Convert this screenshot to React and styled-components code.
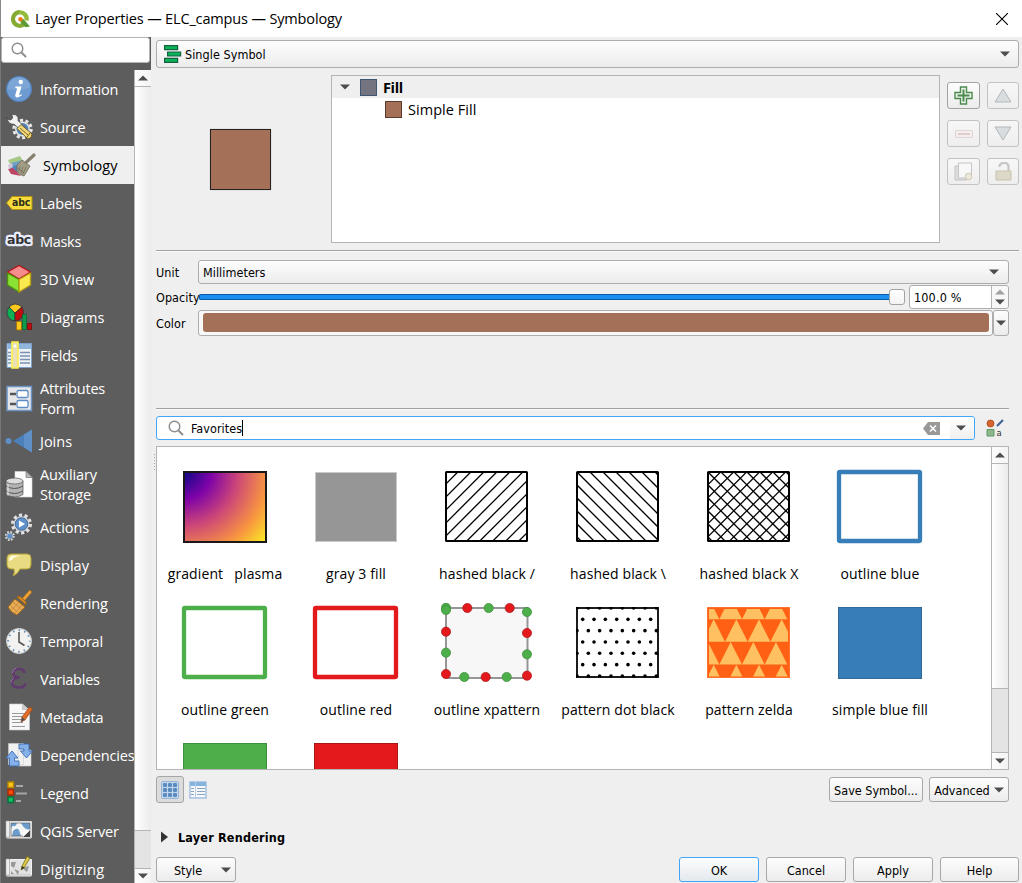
import React from 'react';
import styled, { createGlobalStyle, css } from 'styled-components';

const GlobalStyle = createGlobalStyle`
  * { box-sizing: border-box; }
  html, body { margin: 0; padding: 0; overflow: hidden; }
  svg { display: block; flex: none; }
  button { font: inherit; color: inherit; padding: 0; margin: 0; }
`;

const segoe = css`font-family: "Open Sans", "Noto Sans", sans-serif; font-stretch: normal;`;
const BROWN = '#a57058';

/* ---------- window ---------- */
const Window = styled.div`
  width: 1022px; height: 883px; overflow: hidden;
  display: flex; flex-direction: column;
  background: #efefef; color: #000;
  font-family: "DejaVu Sans Condensed", "DejaVu Sans", sans-serif;
  font-stretch: condensed; font-size: 12.5px; letter-spacing: 0.05px;
`;
const TitleBar = styled.header`
  flex: none; height: 37px; background: #fff; padding: 0 14px 0 9px;
  display: flex; align-items: center; border-left: 1px solid #8a8a8a;
`;
const Title = styled.h1`
  ${segoe}
  margin: 0 0 0 4px; font-size: 14.5px; font-weight: 400; letter-spacing: -0.15px; flex: 1; white-space: nowrap;
`;
const Body = styled.div`flex: 1; min-height: 0; display: flex;`;

/* ---------- sidebar ---------- */
const Sidebar = styled.aside`
  width: 151px; flex: none; background: #5d5d5d; border-left: 1px solid #777;
  display: flex; flex-direction: column;
`;
const SideSearch = styled.div`
  height: 26px; margin: 0 1px 7px 0; background: #fff; border: 1px solid #b4b4b4; border-radius: 3px;
  display: flex; align-items: center; padding-left: 9px; flex: none;
`;
const SideBody = styled.div`display: flex; flex: 1; min-height: 0;`;
const NavList = styled.nav`width: 133px; overflow: hidden;`;
const NavItem = styled.div`
  ${segoe}
  height: ${p => (p.$tall ? 48 : 38)}px; display: flex; align-items: center;
  padding-left: 3px; font-size: 14.5px; line-height: 20px; white-space: pre;
  letter-spacing: ${p => p.$ls ?? -0.13}px;
  color: ${p => (p.$active ? '#000' : '#fff')};
  background: ${p => (p.$active ? '#efefef' : 'transparent')};
  & > span { margin-left: ${p => (p.$active ? 9 : 6)}px; margin-top: 2px; }
`;
const ScrollBar = styled.div`
  width: 17px; flex: none; display: flex; flex-direction: column; border-left: 1px solid #b4b4b4;
  background: linear-gradient(90deg, #fff, #ebebeb);
`;
const ScrollArrow = styled.div`
  height: ${p => p.$h ?? 17}px; flex: none; display: flex; align-items: center; justify-content: center;
  background: linear-gradient(90deg, #fefefe, #f3f3f3);
  ${p => (p.$down ? 'border-top' : 'border-bottom')}: 1px solid #b4b4b4;
`;
const ScrollRest = styled.div`
  margin-top: auto; height: ${p => p.$h}px; background: #e4e4e4; border-top: 1px solid #b4b4b4;
`;
const Splitter = styled.div`
  width: 5px; flex: none; padding: 417px 0 0 3px; display: flex; flex-direction: column; gap: 2px;
  & > i { width: 1px; height: 1px; background: #a5a5a5; }
`;

/* ---------- main ---------- */
const Main = styled.main`flex: 1; padding: 3px 3px 0 0; display: flex; flex-direction: column;`;
const Combo = styled.div`
  height: ${p => p.$h}px; flex: ${p => (p.$grow ? 1 : 'none')};
  border: 1px solid #adadad; border-radius: 3px; background: linear-gradient(#fdfdfd, #ececec);
  display: flex; align-items: center; padding: 0 ${p => p.$pr}px 0 ${p => p.$pl}px;
  & > span { flex: 1; }
  & > svg + span { margin-left: 3px; }
`;
const SymbolRow = styled.section`display: flex; margin-top: 7px; height: 168px; flex: none;`;
const PreviewPane = styled.div`width: 175px; display: flex; align-items: center; padding-left: 54px;`;
const Preview = styled.div`width: 61px; height: 61px; background: ${BROWN}; border: 1px solid #222; box-shadow: 0 0 1px #aaa;`;
const Tree = styled.div`${segoe} width: 609px; background: #fff; border: 1px solid #b4b4b4; font-size: 14.5px;`;
const TreeRow = styled.div`
  height: 22px; line-height: 22px; display: flex; align-items: center; padding-left: ${p => p.$indent}px;
  background: ${p => (p.$head ? '#efefef' : 'transparent')}; font-weight: ${p => (p.$head ? 700 : 400)};
  letter-spacing: ${p => (p.$head ? -0.35 : 0.05)}px;
  & > svg { margin-right: 10px; }
  & > span { margin-top: 2px; }
`;
const Swatch = styled.i`
  width: 17px; height: 17px; margin-right: 6px; background: ${p => p.$bg}; border: 1px solid ${p => p.$line};
`;
const ToolGrid = styled.div`
  margin-left: 7px; padding-top: 7px; display: grid; grid-template-columns: 33px 32px; grid-auto-rows: 27px; gap: 11px 7px;
`;
const ToolButton = styled.button`
  border: 1px solid ${p => (p.$off ? '#c3c3c3' : '#a3a3a3')}; border-radius: 3px;
  background: linear-gradient(${p => (p.$off ? '#f7f7f7, #eee' : '#fdfdfd, #ececec')});
  display: flex; align-items: center; justify-content: center;
`;
const Separator = styled.div`
  flex: none; height: 2px; width: ${p => p.$w}px; margin-top: ${p => p.$mt}px; background: #fafafa; border-top: 1px solid #a0a0a0;
`;
const FormRow = styled.div`
  width: 853px; flex: none; height: ${p => p.$h}px; margin-top: ${p => p.$mt}px; display: flex; align-items: center;
`;
const FormLabel = styled.label`width: 42px; white-space: nowrap;`;
const Slider = styled.div`flex: 1; height: 16px; display: flex; align-items: center; margin: 0 4px 0 1px;`;
const Track = styled.div`
  flex: 1; height: 6px; border: 1px solid #0c5aa4; border-radius: 2px 0 0 2px; border-right: 0; background: #1a8ff0;
`;
const Handle = styled.div`
  width: 16px; height: 16px; border: 1px solid #a3a3a3; border-radius: 3px; background: linear-gradient(#fff, #f4f4f4);
`;
const SpinBox = styled.div`
  width: 100px; height: 24px; border: 1px solid #adadad; border-radius: 3px; background: #fff; display: flex; align-items: center;
  padding-left: 4px; letter-spacing: 0.15px;
  & > span { flex: 1; }
`;
const SpinArrows = styled.div`
  width: 17px; height: 22px; border-left: 1px solid #b4b4b4; background: #f8f8f8; border-radius: 0 3px 3px 0;
  display: flex; flex-direction: column; justify-content: center; gap: 4px; align-items: center; padding-bottom: 1px;
`;
const ColorButton = styled.button`
  flex: 1; height: 26px; border: 1px solid #adadad; border-radius: 3px; background: #f8f8f8; padding: 2px 3px 3px 4px; display: flex;
`;
const ColorFill = styled.span`flex: 1; border-radius: 3px; background: ${BROWN};`;
const ColorArrow = styled.button`
  width: 16px; height: 26px; border: 1px solid #adadad; border-radius: 3px; background: linear-gradient(#fdfdfd, #ececec);
  display: flex; align-items: center; justify-content: center;
`;
const FilterRow = styled.div`display: flex; flex: none; align-items: center; margin-top: 6px; height: 24px; gap: 11px;`;
const FilterBox = styled.div`
  width: 819px; height: 24px; border: 1px solid #43a5f5; border-radius: 3px; background: #fff;
  display: flex; align-items: center; padding-left: 11px;
`;
const FilterText = styled.div`flex: 1; display: flex; align-items: center; margin-left: 7px;`;
const Caret = styled.i`width: 1px; height: 16px; background: #000;`;
const FilterDrop = styled.div`
  width: 24px; height: 22px; margin-left: 10px; background: linear-gradient(#fff, #f0f0f0); border-radius: 0 3px 3px 0;
  display: flex; align-items: center; justify-content: center; padding-right: 3px;
`;
const SymbolPanel = styled.section`
  width: 853px; height: 324px; flex: none; margin-top: 6px; border: 1px solid #b4b4b4; background: #fff; display: flex; overflow: hidden;
`;
const SymbolGrid = styled.div`
  flex: 1; padding: 20px 0 0 2px; display: grid; grid-template-columns: repeat(6, 131px); grid-auto-rows: 136px;
`;
const SymbolCell = styled.figure`
  ${segoe}
  margin: 0; display: flex; flex-direction: column; align-items: center; font-size: 14px; white-space: pre;
  & > figcaption { margin: 17px 0 0 1px; line-height: 20px; letter-spacing: 0.1px; }
`;
const FooterTools = styled.div`
  width: 853px; height: 27px; flex: none; margin-top: 6px; display: flex; align-items: center;
`;
const ViewButton = styled.button`
  width: 28px; height: 27px; border-radius: 3px; display: flex; align-items: center; justify-content: center;
  border: 1px solid ${p => (p.$on ? '#a6a6a6' : 'transparent')}; background: ${p => (p.$on ? '#dcdcdc' : 'transparent')};
`;
const Spacer = styled.div`flex: 1;`;
const PushButton = styled.button`
  width: ${p => p.$w}px; height: 25px; margin-left: ${p => p.$ml ?? 0}px; border-radius: 3px;
  border: 1px solid ${p => (p.$primary ? '#43a5f5' : '#a8a8a8')};
  background: linear-gradient(${p => (p.$primary ? '#fdfdfd, #e3e9ee' : '#fdfdfd, #ececec')});
  display: flex; align-items: center; justify-content: center; gap: ${p => p.$gap ?? 4}px;
  padding: 1px 0 0 ${p => p.$pl ?? 0}px; white-space: nowrap;
`;
const GroupHeader = styled.div`
  height: 20px; flex: none; margin: 24px 0 0 4px; display: flex; align-items: center; gap: 9px; font-weight: 700; letter-spacing: 0.2px;
`;
const DialogButtons = styled.footer`height: 25px; flex: none; margin-top: 10px; display: flex;`;

/* ---------- small drawings ---------- */
const Down = ({ w = 10, c = '#4d4d4d' }) => (
  <svg width={w} height="6" viewBox="0 0 10 6"><path d="M0 .5h10L5 5.5z" fill={c} /></svg>
);
const Up = ({ w = 10, c = '#4d4d4d' }) => (
  <svg width={w} height="6" viewBox="0 0 10 6"><path d="M0 5.5h10L5 .5z" fill={c} /></svg>
);
const Magnifier = () => (
  <svg width="16" height="16" viewBox="0 0 16 16" fill="none" stroke="#8c8c8c">
    <circle cx="6.5" cy="6.5" r="5.3" strokeWidth="1.4" /><path d="M10.5 10.5 15 15" strokeWidth="2" />
  </svg>
);
const Gear = ({ cx, cy, r, fill = '#e8e8e8', n = 10, w = 3.4 }) => (
  <g>
    <circle cx={cx} cy={cy} r={r} fill="none" stroke={fill} strokeWidth={w}
      strokeDasharray={`${(Math.PI * 2 * r) / n / 1.8} ${(Math.PI * 2 * r) / n * (1 - 1 / 1.8)}`} />
    <circle cx={cx} cy={cy} r={r - 1} fill={fill} stroke="#aaa" strokeWidth=".3" />
  </g>
);

const icons = {
  info: <>
    <circle cx="15" cy="15" r="12.600" fill="#6d9bd1" stroke="#4d80bd" />
    <path d="M4 15a11 11 0 0 1 22-2q-7 5-22 2z" fill="#8db2de" opacity=".5" />
    <circle cx="16.8" cy="8" r="2.2" fill="#fff" />
    <path d="M11.5 12.5h6l-2.3 8q-.2 1.5 2.8-.5l-.4 1.6q-6.5 4-6.4-.4l1.8-6.3q.1-1-1.8-.8z" fill="#fff" />
  </>,
  source: <>
    <Gear cx={18.5} cy={17} r={8.500} />
    <circle cx="18.5" cy="17" r="6" fill="#5580b8" />
    <path d="M2.8 5.5q1 3 4 2.500l1.800-2q.4-2.600-1.800-3.500l4.700.2q3.500 2 2.600 6l6 6-3 3.500-7-6q-6 .5-7.300-6.700z" fill="#f2f2f2" stroke="#444" strokeWidth=".7" />
    <path d="m13 16.500 4-4 11 9.500-1 3.500-3 1.500z" fill="#f3d877" stroke="#6b5a20" strokeWidth=".9" />
    <path d="m22.500 26 3.500-5M16 16l8 7" stroke="#6b5a20" strokeWidth=".9" />
  </>,
  symbology: <>
    <path d="m4 10 12-4 3 5-12 5z" fill="#a5c884" /><path d="m7 13 12-3 2 5-15 6z" fill="#6e9fc8" />
    <path d="m6 16 13-1 1 6-13 3z" fill="#4e86b8" /><path d="m4 19 5-1 8 8-10-2z" fill="#c04562" />
    <path d="m4 15 4-2 1 4-4 2z" fill="#cfc7d8" />
    <path d="m13 15 5-5 8 6-6 10q-5-1-7-5z" fill="#a19c83" stroke="#6f6b5a" strokeWidth=".8" />
    <path d="m14 18 6 5M16 16l-1 5m4-4-2 6m5-6-3 7" stroke="#6f6b5a" strokeWidth=".7" fill="none" />
    <path d="M22 12.500 30 5" stroke="#86826e" strokeWidth="3.200" strokeLinecap="round" />
  </>,
  labels: <>
    <path d="M2.500 15 8 8.500h20v13H8z" fill="#f7dc3c" stroke="#b39410" />
    <text x="8" y="18" fontSize="10" fontWeight="700" fontFamily="DejaVu Sans, sans-serif" textLength="18" lengthAdjust="spacingAndGlyphs" fill="#2c2c1c">abc</text>
  </>,
  masks: <>
    <g fontSize="12.500" fontWeight="700" fontFamily="DejaVu Sans, sans-serif">
      <text x="3" y="18" textLength="24" lengthAdjust="spacingAndGlyphs" fill="#e9ecfa" stroke="#e9ecfa" strokeWidth="4.500" strokeLinejoin="round">abc</text>
      <text x="3" y="18" textLength="24" lengthAdjust="spacingAndGlyphs" fill="#333">abc</text>
    </g>
  </>,
  cube: <g strokeLinejoin="round" strokeWidth="1.400">
    <path d="M15 1.500 26.500 8 15 15 3.500 8z" fill="#f58d8d" stroke="#b5121a" />
    <path d="M3.500 9v12L15 28V15.500z" fill="#8ae234" stroke="#4c8f10" />
    <path d="M26.500 9v12L15 28V15.500z" fill="#fce94f" stroke="#b9a010" />
  </g>,
  diagrams: <g stroke="#333" strokeWidth=".8">
    <path d="M11 11 5 5q6-6 13 0z" fill="#fcc81c" /><path d="M11 11 5 5q-5 7 2 13l4 1z" fill="#0fb054" />
    <path d="m11 11 7-6q4 8-3 13l-4 1z" fill="#c00d0d" />
    <path d="M12.500 19.500h5v8.500h-5z" fill="#fcc81c" stroke="#a46c00" /><path d="M18.500 12.500h4v15h-4z" fill="#0e9b4c" stroke="#0a6a34" />
    <path d="M23.500 21.500h4v6h-4z" fill="#c00d0d" stroke="#7c0606" />
  </g>,
  fields: <>
    <path d="M3 3.500h24.500v24H3z" fill="#eef1f5" stroke="#7ba0cc" /><path d="M3.500 4h23.500v5H3.500z" fill="#8fb7dc" />
    <path d="M16 12.500h10M16 16h10M16 19.500h10M16 23h10M4 12.500h3M4 16h3M4 19.500h3M4 23h3" stroke="#7b93b3" strokeWidth="1.400" />
    <path d="M8 2h6v26H8z" fill="#eadfb6" stroke="#fbf04a" strokeWidth="1.600" /><circle cx="11" cy="6" r="1.500" fill="#fff" />
  </>,
  form: <>
    <path d="M3 3.500h24.500v24H3z" fill="#e4e6ea" stroke="#6e94c4" strokeWidth="1.500" />
    <path d="M6 11h6M6 21h6" stroke="#555" strokeWidth="2.400" />
    <rect x="13" y="7.500" width="11" height="7" rx="1.500" fill="#fff" stroke="#5d8bc4" strokeWidth="1.300" />
    <rect x="13" y="17.500" width="11" height="7" rx="1.500" fill="#fff" stroke="#5d8bc4" strokeWidth="1.300" />
  </>,
  joins: <><path d="M9 15 28 3.500v23z" fill="#4b80bb" /><path d="M20 8.500 28 3.500v23l-8-5z" fill="#6d9bd0" opacity=".6" /><circle cx="4.500" cy="15" r="3" fill="#5d8fc6" /></>,
  aux: <>
    <path d="M11 2.500h11l6 6V28H11z" fill="#fff" stroke="#d9d9d9" strokeWidth=".6" /><path d="M22 2.500v6h6z" fill="#b9b9b9" stroke="#666" strokeWidth=".6" />
    <path d="M2 12v13.500q8.500 5 17 0V12z" fill="#b4b4b4" stroke="#555" strokeWidth=".7" />
    <ellipse cx="10.500" cy="12" rx="8.500" ry="3" fill="#dcdcdc" stroke="#555" strokeWidth=".7" />
    <path d="M2 17q8.500 5 17 0M2 22q8.500 5 17 0" stroke="#555" fill="none" /><path d="M4 15.500v11" stroke="#eee" />
  </>,
  actions: <>
    <Gear cx={17.500} cy={12} r={8.800} fill="#e4e4e4" /><circle cx="17.500" cy="12" r="6.300" fill="#5f90c9" stroke="#42699a" />
    <path d="m15 8.500 6 3.500-6 3.500z" fill="#fff" /><Gear cx={5.800} cy={24} r={4} n={8} w={2} fill="#d8d8d8" /><circle cx="5.800" cy="24" r="2.600" fill="#5f90c9" />
  </>,
  display: <>
    <path d="M7 4h16q4 0 4 4v7q0 4-4 4h-7q-2 5-7 7 2-3 1-7H7q-4 0-4-4V8q0-4 4-4z" fill="#e8db82" stroke="#b3a136" />
    <path d="M5 11q0-5.500 5-5.500h8q-9 1-10 4.500z" fill="#fffce0" />
  </>,
  rendering: <>
    <path d="m19 12 7-8" stroke="#b87718" strokeWidth="3.600" strokeLinecap="round" /><path d="m19 12 7-8" stroke="#f0a63a" strokeWidth="2" strokeLinecap="round" />
    <path d="m11 11 10 8-8 8q-6-2-9-8z" fill="#e8ab55" stroke="#a1671a" /><path d="m13 9 9 8q1-4-3-6-3-4-6-2z" fill="#d98a22" stroke="#a1671a" />
    <path d="m6 17 8 8m-5-11 9 8M8 22l6-7m-3 10 7-8" stroke="#b67a2c" strokeWidth=".6" />
  </>,
  temporal: <>
    <circle cx="15" cy="15" r="12.500" fill="#f2f2f0" stroke="#d0d0ce" />
    <circle cx="15" cy="15" r="10.800" fill="none" stroke="#6a8fbc" strokeWidth="2" strokeDasharray="1.500 4.155" strokeDashoffset=".75" />
    <path d="M15 6v10l5.500 3.500" fill="none" stroke="#555" strokeWidth="1.600" />
  </>,
  variables: <>
    <path d="M20.500 9q-.5-4-5.500-4-5.500 0-5.500 4t6 4.500Q8 14 8 18.500q0 5 7.500 5 5 0 6-4" fill="none" stroke="#613a70" strokeWidth="2.600" />
    <path d="M8.500 9q0-4 4-5M7 18.500q0-2.500 2.500-4" fill="none" stroke="#a184ab" strokeWidth=".8" />
  </>,
  metadata: <>
    <path d="M5.500 2h13l7 6v20h-20z" fill="#f7f7f7" stroke="#ccc" strokeWidth=".6" /><path d="M18 2v6h7z" fill="#c9c9c9" />
    <path d="M8 11.500h12M8 14.500h11M8 17.500h10M8 20.500h11M8 24.500h13" stroke="#999" />
    <path d="m17 20 1-5 7.500-10 3 2L21 18z" fill="#e06a26" stroke="#9c4412" strokeWidth=".7" /><path d="m17 20 1-5 3 2.500z" fill="#555" />
  </>,
  dependencies: <>
    <path d="M4.500 3.500h15v21h-15zM14 10h13v16H14z" fill="#f1f1f1" stroke="#ccc" strokeWidth=".6" />
    <path d="M15 4h10v7h3.500L22.500 18l-6-7H20V9h-5z" fill="#85b0ea" stroke="#3b6cb2" strokeWidth=".9" />
    <path d="M15 26H5.500v-8H2l6-7 6 7h-3.500v3H15z" fill="#85b0ea" stroke="#3b6cb2" strokeWidth=".9" />
  </>,
  legend: <g strokeWidth="1.400">
    <path d="M4 4h5.500v5.500H4z" fill="#fccb1a" stroke="#b98500" /><path d="M4 11.500h5.500V17H4z" fill="#fa4a08" stroke="#a62c00" /><path d="M4 19h5.500v5.500H4z" fill="#0fc060" stroke="#07703a" />
    <path d="M12 8h7M12 15.500h11M12 23h5" stroke="#a5a5a5" strokeWidth="1.800" />
  </g>,
  server: <>
    <path d="M6 5.500h21.500v16H6z" fill="#f4f4f4" stroke="#ddd" /><path d="M2 5h3.500v16.500H2zM2 21h25v1.500H3z" fill="#efefef" stroke="#aaa" strokeWidth=".6" />
    <path d="M7 7h6q-1 4-3 3t-3 3zM9 15q4-4 6-1l2 6H8zM17 7h9v6q-5 2-9-6z" fill="#6c9ccb" />
    <path d="M7 7h19v13H7z" fill="none" stroke="#555" strokeWidth=".6" />
    <path d="m19 21 7-7v7z" fill="#444" /><path d="m19 21 0-5 7-2z" fill="#fff" />
  </>,
  digitizing: <>
    <path d="M6 5.500h21.500v16H6z" fill="#e2e2e2" stroke="#f2f2f2" /><path d="M2 5h3.500v16.500H2zM2 21h25v1.500H3z" fill="#efefef" stroke="#aaa" strokeWidth=".6" />
    <path d="M7 8h5l-2 6-3-2zM10 15l5 2-1 4zM18 14l7-2-2 6zM7 17l3 3H7z" fill="#999" />
    <path d="m17 16 1-4L23 2.500l3 1.500-6 10z" fill="#dcc948" stroke="#777016" strokeWidth=".8" /><path d="m17 16 1-4 2.500 1.500z" fill="#333" />
  </>,
};

const NAV = [
  ['info', 'Information', -0.2], ['source', 'Source', -0.2], ['symbology', 'Symbology', 0.1], ['labels', 'Labels', -0.2], ['masks', 'Masks', -0.3],
  ['cube', '3D View', 0], ['diagrams', 'Diagrams', 0], ['fields', 'Fields', -0.2], ['form', 'Attributes\nForm', -0.2], ['joins', 'Joins', 0],
  ['aux', 'Auxiliary\nStorage', -0.1], ['actions', 'Actions', -0.05], ['display', 'Display', 0], ['rendering', 'Rendering', -0.2], ['temporal', 'Temporal', -0.25],
  ['variables', 'Variables', -0.25], ['metadata', 'Metadata'], ['dependencies', 'Dependencies'], ['legend', 'Legend'],
  ['server', 'QGIS Server', -0.2], ['digitizing', 'Digitizing', 0.25],
];

/* ---------- symbol thumbnails ---------- */
const Hatch = ({ id, slash, back, c = 21.8 }) => (
  <>
    <clipPath id={id}><rect x="5" y="5" width="81" height="69" /></clipPath>
    <g clipPath={`url(#${id})`} stroke="#000" strokeWidth="1.300">
      {slash && Array.from({ length: 13 }, (_, i) => c + 13 * (i - 1)).map(k => <path key={k} d={`M0 ${k}L${k} 0`} />)}
      {back && Array.from({ length: 14 }, (_, i) => 13 * (i - 7)).map(k => <path key={k} d={`M0 ${k}L100 ${k + 100}`} />)}
    </g>
    <rect x="5" y="5" width="81" height="69" rx=".5" fill="none" stroke="#000" strokeWidth="2" />
  </>
);
const Outline = ({ c }) => <rect x="5" y="5" width="81" height="69" rx="1" fill="none" stroke={c} strokeWidth="4.300" />;
const Solid = ({ c, line }) => <rect x="4.500" y="4.500" width="83" height="71" fill={c} stroke={line} />;
const G = '#4daf4a', R = '#e4191c';
const MARKS = [[5, 4.7, G], [5, 7, G], [26.3, 5, R], [47.7, 5, G], [68.7, 5, R], [86, 9, G], [86, 30, R], [86, 51.3, G], [86, 72.7, R],
  [65.7, 74, G], [44.7, 74, R], [23.3, 74, G], [5, 71, R], [5, 49.7, G], [5, 28.7, R]];
const ZELDA = [[5, -6.3], [10.7, 16.3], [5, 39], [10.7, 61.7]];

const SYMBOLS = [
  ['gradient   plasma', <>
    <radialGradient id="plasma" gradientUnits="userSpaceOnUse" cx="5" cy="5" r="108">
      <stop offset="0" stopColor="#0d0887" /><stop offset=".25" stopColor="#7e03a8" /><stop offset=".5" stopColor="#cc4778" />
      <stop offset=".77" stopColor="#f89540" /><stop offset="1" stopColor="#f9f021" />
    </radialGradient>
    <rect x="5" y="5" width="82" height="70" fill="url(#plasma)" stroke="#1a1718" strokeWidth="2" /></>],
  ['gray 3 fill', <rect x="5.500" y="5.500" width="81" height="69" fill="#969696" stroke="#c9c9c9" />],
  ['hashed black /', <Hatch id="h1" slash />],
  ['hashed black \\', <Hatch id="h2" back />],
  ['hashed black X', <Hatch id="h3" slash back c={22.6} />],
  ['outline blue', <Outline c="#377eb8" />],
  ['outline green', <Outline c={G} />],
  ['outline red', <Outline c={R} />],
  ['outline xpattern', <>
    <rect x="5" y="5" width="81.500" height="70" fill="#f7f7f7" stroke="#969696" strokeWidth="2" />
    {MARKS.map(([x, y, c], i) => <circle key={i} cx={x} cy={y} r="4.600" fill={c} stroke={c === G ? '#3c8a3a' : '#a81619'} strokeWidth=".7" />)}</>],
  ['pattern dot black', <>
    <clipPath id="dots"><rect x="4" y="4" width="83" height="71.500" /></clipPath>
    <rect x="5" y="5" width="81" height="69" fill="#fff" stroke="#1c1c1c" strokeWidth="2" />
    <g clipPath="url(#dots)">
      {Array.from({ length: 7 }, (_, r) => Array.from({ length: 8 }, (_, i) => (
        <circle key={`${r}-${i}`} cx={(r % 2 ? 10.7 : 5) + i * 11.33} cy={5 + r * 11.33} r="1.800" />)))}
    </g></>],
  ['pattern zelda', <>
    <clipPath id="zelda"><rect x="6" y="6" width="79" height="67.500" /></clipPath>
    <rect x="4.500" y="4.500" width="82" height="70" fill="#ff6013" stroke="#ff7230" />
    <g clipPath="url(#zelda)" fill="#ffc061">
      {ZELDA.map(([x, y], r) => [0, 1, 2, 3].map(i => (
        <path key={`${r}-${i}`} d={`M${x + i * 22.67} ${y}l11.330 22.500h-22.660z`} />)))}
    </g></>],
  ['simple blue fill', <Solid c="#377eb8" line="#2f6a9a" />],
  ['', <Solid c={G} line="#3e8d3c" />],
  ['', <Solid c={R} line="#a81619" />],
];

export default function App() {
  return (
    <>
      <GlobalStyle />
      <Window>
        <TitleBar>
          <svg width="21" height="20" viewBox="0 0 21 20">
            <path d="M10 3.200a6.800 6.800 0 1 0 4.200 12" fill="none" stroke="#85ab35" strokeWidth="4.200" />
            <path d="M9 3.300a6.800 6.800 0 0 1 7.500 8.300" fill="none" stroke="#94bc3a" strokeWidth="4.200" />
            <path d="m10.500 10.500 3-.5 6.500 7.500-4.500.8-4.700-4.600z" fill="#5c9a33" />
            <circle cx="10.500" cy="10.200" r="2.200" fill="#ee7913" />
          </svg>
          <Title>Layer Properties — ELC_campus — Symbology</Title>
          <svg width="12" height="12" viewBox="0 0 12 12"><path d="m0 0 12 12M12 0 0 12" stroke="#000" strokeWidth="1.100" /></svg>
        </TitleBar>
        <Body>
          <Sidebar>
            <SideSearch><Magnifier /></SideSearch>
            <SideBody>
              <NavList>
                {NAV.map(([icon, label, ls]) => (
                  <NavItem key={label} $active={icon === 'symbology'} $tall={label.includes('\n')} $ls={ls}>
                    <svg width="30" height="30" viewBox="0 0 30 30" overflow="visible">{icons[icon]}</svg>
                    <span>{label}</span>
                  </NavItem>
                ))}
              </NavList>
              <ScrollBar>
                <ScrollArrow><Up /></ScrollArrow>
                <ScrollRest $h={38} />
                <ScrollArrow $down $h={15}><Down /></ScrollArrow>
              </ScrollBar>
            </SideBody>
          </Sidebar>
          <Splitter><i /><i /><i /><i /><i /><i /></Splitter>
          <Main>
            <Combo $h={28} $pl={7} $pr={8}>
              <svg width="18" height="18" viewBox="0 0 18 18" fill="#0cb257" stroke="#166042" strokeWidth="1.200">
                <path d="M.6.600h13v4H.6zM3.600 7h13v4h-13zM.6 13.400h13v4H.6z" />
              </svg>
              <span>Single Symbol</span>
              <Down />
            </Combo>
            <SymbolRow>
              <PreviewPane><Preview /></PreviewPane>
              <Tree>
                <TreeRow $head $indent={8}><Down /><Swatch $bg="#747480" $line="#3f5673" /><span>Fill</span></TreeRow>
                <TreeRow $indent={53}><Swatch $bg={BROWN} $line="#5c3c2f" /><span>Simple Fill</span></TreeRow>
              </Tree>
              <ToolGrid>
                <ToolButton>
                  <svg width="19" height="19" viewBox="0 0 19 19" fill="#eef5ee" stroke="#4c8a4f">
                    <path d="M6.500 1h6v5.500H18v6h-5.500V18h-6v-5.500H1v-6h5.500z" strokeWidth="1.400" /><path d="M9.500 3.500v12M3.500 9.500h12" strokeWidth="2" />
                  </svg>
                </ToolButton>
                <ToolButton $off><svg width="18" height="15" viewBox="0 0 18 15"><path d="M1 14 9 1l8 13z" fill="#d9dde0" stroke="#b3b8bb" /></svg></ToolButton>
                <ToolButton $off>
                  <svg width="18" height="8" viewBox="0 0 18 8"><path d="M.5.500h17v7H.5z" fill="#f4eeee" stroke="#e0d6d6" /><path d="M3 4h12" stroke="#e2cccc" strokeWidth="2" /></svg>
                </ToolButton>
                <ToolButton $off><svg width="18" height="15" viewBox="0 0 18 15"><path d="M1 1 9 14l8-13z" fill="#d9dde0" stroke="#b3b8bb" /></svg></ToolButton>
                <ToolButton $off>
                  <svg width="19" height="19" viewBox="0 0 19 19"><path d="M1 4h12v14H1z" fill="#ddd" stroke="#c4c4c4" /><path d="M4.500 1h13v15h-13z" fill="#f8f8f8" stroke="#c4c4c4" /><circle cx="14.500" cy="14.500" r="3.300" fill="#ebe8da" stroke="#cfcbb5" /></svg>
                </ToolButton>
                <ToolButton $off>
                  <svg width="17" height="19" viewBox="0 0 17 19"><path d="M4.500 5q0-4 4.500-4t4.500 4v4" fill="none" stroke="#c6c6c6" strokeWidth="2.200" /><path d="M1 9h15v9H1z" fill="#dcd9c8" stroke="#c7c3ae" /></svg>
                </ToolButton>
              </ToolGrid>
            </SymbolRow>
            <Separator $w={863} $mt={7} />
            <FormRow $h={24} $mt={8}>
              <FormLabel>Unit</FormLabel>
              <Combo $h={24} $grow $pl={4} $pr={9}><span>Millimeters</span><Down /></Combo>
            </FormRow>
            <FormRow $h={24} $mt={1}>
              <FormLabel>Opacity</FormLabel>
              <Slider><Track /><Handle /></Slider>
              <SpinBox><span>100.0 %</span><SpinArrows><Up c="#a0a0a0" /><Down /></SpinArrows></SpinBox>
            </FormRow>
            <FormRow $h={26} $mt={1}>
              <FormLabel>Color</FormLabel>
              <ColorButton><ColorFill /></ColorButton>
              <ColorArrow><Down /></ColorArrow>
            </FormRow>
            <Separator $w={853} $mt={72} />
            <FilterRow>
              <FilterBox>
                <Magnifier />
                <FilterText>Favorites<Caret /></FilterText>
                <svg width="17" height="13" viewBox="0 0 17 13"><path d="M0 6.500 5 0h12v13H5z" fill="#999" /><path d="m7 3.500 6 6m0-6-6 6" stroke="#fff" strokeWidth="1.500" /></svg>
                <FilterDrop><Down /></FilterDrop>
              </FilterBox>
              <svg width="18" height="18" viewBox="0 0 18 18">
                <circle cx="4.500" cy="4.500" r="3.500" fill="#d5642e" stroke="#a94a1c" strokeWidth=".8" /><path d="m11 7 6-6" stroke="#3f6590" strokeWidth="2.200" />
                <path d="M1 10.500h7V17H1z" fill="#8fb58d" stroke="#5f9a68" /><text x="10.500" y="17" fontSize="9.500" fontFamily="DejaVu Sans, sans-serif" fill="#333">a</text>
              </svg>
            </FilterRow>
            <SymbolPanel>
              <SymbolGrid>
                {SYMBOLS.map(([label, art], i) => (
                  <SymbolCell key={i}><svg width="91" height="80" viewBox="0 0 91 80">{art}</svg><figcaption>{label}</figcaption></SymbolCell>
                ))}
              </SymbolGrid>
              <ScrollBar>
                <ScrollArrow><Up /></ScrollArrow>
                <ScrollRest $h={64} />
                <ScrollArrow $down><Down /></ScrollArrow>
              </ScrollBar>
            </SymbolPanel>
            <FooterTools>
              <ViewButton $on>
                <svg width="18" height="18" viewBox="0 0 18 18"><rect x=".5" y=".5" width="17" height="17" rx="1" fill="#c3d5e9" stroke="#95b5d8" />
                  {[2, 7, 12].map(y => [2, 7, 12].map(x => <rect key={`${x}${y}`} x={x} y={y} width="4" height="4" rx="1" fill="#5a8cc2" />))}</svg>
              </ViewButton>
              <ViewButton>
                <svg width="18" height="18" viewBox="0 0 18 18"><rect x="1" y="1" width="16" height="16" fill="#f6f8fa" stroke="#a8c4e2" strokeWidth="1.600" /><path d="M1 1h16v4H1z" fill="#85b4dc" />
                  <path d="M6.500 1v16" stroke="#b5cde6" /><path d="M8 7.500h8M8 10.500h8M8 13.500h8M2 7.500h3M2 10.500h3M2 13.500h3" stroke="#8aa5c4" /></svg>
              </ViewButton>
              <Spacer />
              <PushButton $w={94}>Save Symbol...</PushButton>
              <PushButton $w={80} $ml={6}>Advanced <Down /></PushButton>
            </FooterTools>
            <GroupHeader>
              <svg width="9" height="12" viewBox="0 0 9 12"><path d="M1 .5 8 6l-7 5.500z" fill="#333" /></svg>
              Layer Rendering
            </GroupHeader>
            <DialogButtons>
              <PushButton $w={80} $gap={19} $pl={13}>Style <Down /></PushButton>
              <Spacer />
              <PushButton $w={80} $primary>OK</PushButton>
              <PushButton $w={80} $ml={7}>Cancel</PushButton>
              <PushButton $w={80} $ml={7}>Apply</PushButton>
              <PushButton $w={79} $ml={7}>Help</PushButton>
            </DialogButtons>
          </Main>
        </Body>
      </Window>
    </>
  );
}
